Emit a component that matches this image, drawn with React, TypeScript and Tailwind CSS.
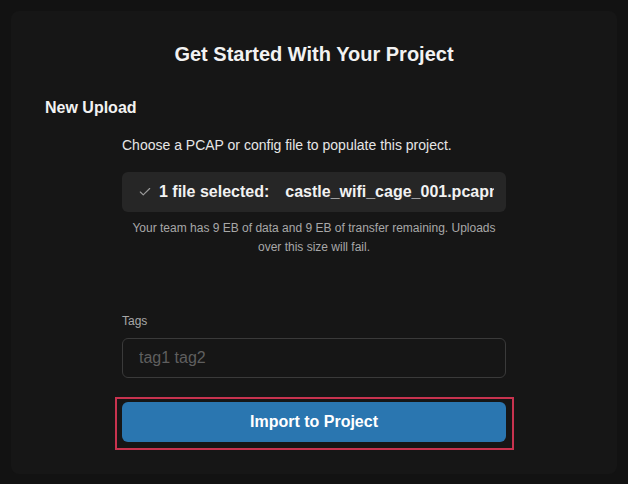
import { Check } from 'lucide-react';

function App() {
  return (
    <div className="min-h-screen bg-[#121212] p-[11px] font-['Liberation_Sans',Arial,sans-serif]">
      <div className="h-[463px] rounded-lg bg-[#161616] px-[34px] pt-[31px]">
        <h1 className="text-center text-[20px] font-bold leading-[24px] text-[#f2f2f2]">
          Get Started With Your Project
        </h1>

        <h2 className="mt-[32px] text-[16px] font-bold leading-[20px] text-[#f2f2f2]">New Upload</h2>

        <div className="mx-auto w-[384px]">
          <p className="mt-[17px] text-[14px] leading-[20px] text-[#e6e6e6]">
            Choose a PCAP or config file to populate this project.
          </p>

          <div className="mt-[17px] flex h-[40px] items-center overflow-hidden whitespace-nowrap rounded-md bg-[#262626] pl-[16px] pr-[12px]">
            <Check className="h-[14px] w-[14px] shrink-0 text-[#9a9a9a]" strokeWidth={2} />
            <span className="ml-[7px] shrink-0 text-[16px] font-bold text-[#f2f2f2]">1 file selected:</span>
            <span className="ml-[16px] overflow-hidden text-[16px] font-bold text-[#f2f2f2]">
              castle_wifi_cage_001.pcapng
            </span>
          </div>

          <p className="mt-[7px] text-center text-[12px] leading-[19px] text-[#a8a8a8]">
            Your team has 9 EB of data and 9 EB of transfer remaining. Uploads over this size will fail.
          </p>

          <label className="mt-[56px] block text-[12px] leading-[16px] text-[#a8a8a8]">Tags</label>
          <input
            className="mt-[9px] h-[40px] w-full rounded-md border border-[#3a3a3a] bg-transparent px-[16px] text-[16px] text-[#e6e6e6] outline-none placeholder:text-[#5f5f5f]"
            placeholder="tag1 tag2"
          />

          <div className="-ml-[7px] -mr-[8px] mt-[19px] border-2 border-[#c8334f] pb-[6px] pl-[5px] pr-[6px] pt-[3px]">
            <button className="h-[40px] w-full rounded-md bg-[#2a76b0] text-[16px] font-bold text-white">
              Import to Project
            </button>
          </div>
        </div>
      </div>
    </div>
  );
}

export default App;
